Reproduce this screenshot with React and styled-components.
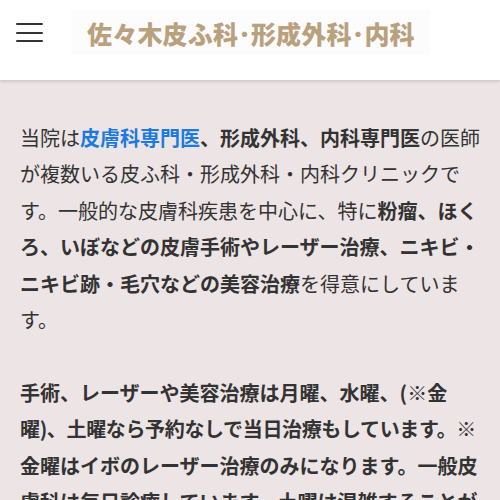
import { createGlobalStyle, styled } from "styled-components";

const GlobalStyle = createGlobalStyle`
  html, body {
    margin: 0;
    padding: 0;
  }
  body {
    background: #ece4e5;
    font-family: "Noto Sans CJK JP", "Noto Sans", sans-serif;
    color: #333;
  }
`;

const Header = styled.header`
  display: flex;
  align-items: center;
  gap: 28px;
  height: 80px;
  box-sizing: border-box;
  padding: 10px 0 25px 16px;
  background: #fff;
  box-shadow: 0 1px 4px rgba(0, 0, 0, 0.18);
  position: relative;
`;

const Burger = styled.button`
  display: flex;
  flex-direction: column;
  gap: 6.5px;
  width: 27px;
  padding: 0;
  border: none;
  background: none;

  span {
    display: block;
    height: 2px;
    background: #333;
    border-radius: 1px;
  }
`;

const Logo = styled.div`
  width: 359px;
  height: 45px;
  box-sizing: border-box;
  padding-left: 16px;
  display: flex;
  align-items: center;
  background: #fdfcfc;
  color: #b9a17e;
  font-size: 25px;
  font-weight: 900;
  letter-spacing: 0.2px;
  white-space: nowrap;
`;

const Main = styled.main`
  padding: 120px 20px 0;
  margin-top: -80px;
`;

const Para = styled.p`
  margin: 0 0 36.4px;
  font-size: 20px;
  line-height: 36.4px;
  font-weight: ${(p) => (p.$bold ? 700 : 400)};
`;

const Strong = styled.strong`
  font-weight: 700;
`;

const Tight = styled.span`
  letter-spacing: -0.35px;
`;

const Link = styled.a`
  color: #1a7ae0;
  font-weight: 700;
  text-decoration: none;
`;

export default function App() {
  return (
    <>
      <GlobalStyle />
      <Header>
        <Burger aria-label="menu">
          <span />
          <span />
          <span />
        </Burger>
        <Logo>佐々木皮ふ科･形成外科･内科</Logo>
      </Header>
      <Main>
        <Para>
          当院は<Link href="#">皮膚科専門医</Link>
          <Strong>、形成外科、内科専門医</Strong>の医師が複数いる皮ふ科・形成外科・内科クリニックです。一般的な皮膚科疾患を中心に、特に
          <Strong>
            粉瘤、ほくろ、いぼなどの皮膚手術やレーザー治療、ニキビ・ニキビ跡・毛穴などの美容治療
          </Strong>
          を得意にしています。
        </Para>
        <Para $bold>
          手術、レーザーや美容治療は月曜、水曜、(※金
          <Tight>曜)、土曜なら予約なしで当日治療もしています。※</Tight>
          金曜はイボのレーザー治療のみになります。一般皮膚科は毎日診療しています。土曜は混雑することがあります。
        </Para>
      </Main>
    </>
  );
}
